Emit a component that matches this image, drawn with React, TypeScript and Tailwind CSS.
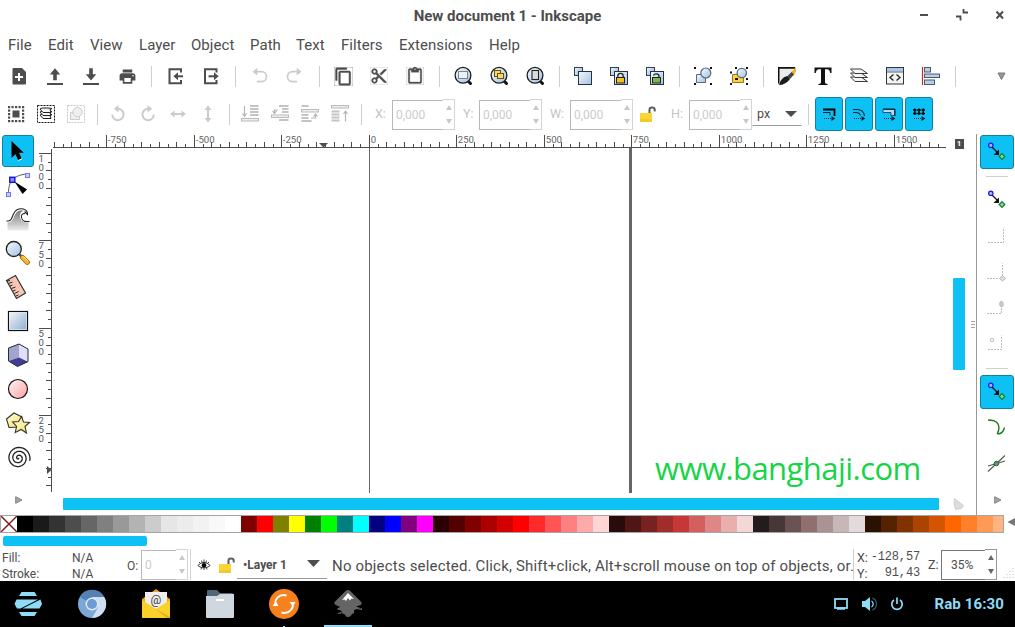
import React from "react";
import type { ReactNode } from "react";
import { MdPrint, MdContentCopy, MdContentCut, MdContentPaste } from "react-icons/md";

const D = "#4d4d4d";
const L = "#cbcbcb";

function Ico({ children, s = 24 }: { children: ReactNode; s?: number }) {
  return (
    <svg width={s} height={s} viewBox={`0 0 ${s} ${s}`} fill="none" className="shrink-0">
      {children}
    </svg>
  );
}

function Defs() {
  return (
    <svg width="0" height="0" className="absolute">
      <defs>
        <linearGradient id="blue" x1="0" y1="0" x2="1" y2="1">
          <stop offset="0" stopColor="#f4f9fd" />
          <stop offset="1" stopColor="#a3c2e3" />
        </linearGradient>
        <linearGradient id="rect" x1="0" y1="0" x2="1" y2="1">
          <stop offset="0" stopColor="#f4f8fb" />
          <stop offset="1" stopColor="#8badd0" />
        </linearGradient>
        <linearGradient id="pink" x1="0" y1="0" x2="1" y2="1">
          <stop offset="0" stopColor="#fff6f6" />
          <stop offset="1" stopColor="#ffa0a4" />
        </linearGradient>
        <linearGradient id="yellow" x1="0" y1="0" x2="1" y2="1">
          <stop offset="0" stopColor="#fffce8" />
          <stop offset="1" stopColor="#fbe45a" />
        </linearGradient>
        <linearGradient id="grey" x1="0" y1="0" x2="0" y2="1">
          <stop offset="0" stopColor="#777" />
          <stop offset="1" stopColor="#ececec" />
        </linearGradient>
      </defs>
    </svg>
  );
}

const ZoomIcon = ({ children }: { children: ReactNode }) => (
  <Ico>
    <path d="M17 17l2.500 2.500" stroke="#111" strokeWidth="3" strokeLinecap="round" />
    <circle cx="12" cy="11.300" r="7.900" fill="url(#blue)" stroke="#1c1c1c" strokeWidth="1.300" />
    {children}
  </Ico>
);

const CloneIcon = ({ lock }: { lock?: string }) => (
  <Ico>
    <rect x="3.500" y="3.500" width="8" height="8" fill="url(#rect)" stroke="#2d3f55" />
    <rect x="7.500" y="7.500" width="13" height="13" fill="url(#blue)" stroke="#26323f" />
    {lock && (
      <>
        <path d={lock === "#f5c21c" ? "M10.800 14v-2a2.700 2.700 0 0 1 5.400 0v2" : "M10.500 11.500a2.800 2.300 0 0 1 5.500 .4v2"} stroke="#222" strokeWidth="1.300" />
        <rect x="9.500" y="13.500" width="8" height="5.500" fill={lock} stroke="#222" />
      </>
    )}
  </Ico>
);

const Handles = () => (
  <path d="M3 3h2v2h-2zM19 3h2v2h-2zM3 19h2v2h-2zM19 19h2v2h-2z" fill="#111" />
);

const Sep = () => (
  <span className="flex h-full w-3 shrink-0 items-center justify-center">
    <span className="h-[21px] w-px bg-[#cfcfcf]" />
  </span>
);

const Cell = ({ children }: { children: ReactNode }) => (
  <span className="flex h-full w-9 shrink-0 items-center justify-center text-[#4d4d4d]">{children}</span>
);

const Cell30 = ({ children }: { children: ReactNode }) => (
  <span className="flex h-full w-[30px] shrink-0 items-center justify-center">{children}</span>
);

function CommandBar() {
  return (
    <div className="mb-[2px] flex h-8 shrink-0 pl-px">
      <Cell>
        <Ico>
          <path d="M6.500 4h8.500l4 4v11.500a1 1 0 0 1-1 1H6.500a1 1 0 0 1-1-1V5a1 1 0 0 1 1-1z" fill={D} />
          <path d="M12 9v8M8 13h8" stroke="#fff" strokeWidth="2" />
        </Ico>
      </Cell>
      <Cell>
        <Ico><path d="M12 4.200l5.200 6.300h-3.400v5.800h-3.600v-5.800H6.800zM4 19h16v2H4z" fill={D} /></Ico>
      </Cell>
      <Cell>
        <Ico><path d="M12 16.500L6.800 10.300h3.400V4.300h3.600v6h3.400zM4 19h16v2H4z" fill={D} /></Ico>
      </Cell>
      <Cell><MdPrint size={19} /></Cell>
      <Sep />
      <Cell>
        <Ico>
          <path d="M18 8.500V5.300H6.500v14H18v-3.300" stroke={D} strokeWidth="2" />
          <path d="M20 12.300h-7" stroke={D} strokeWidth="2" />
          <path d="M15 8.300v8l-4.600-4z" fill={D} />
        </Ico>
      </Cell>
      <Cell>
        <Ico>
          <path d="M17.500 8.500V5.300H6v14h11.500v-3.300" stroke={D} strokeWidth="2" />
          <path d="M9.500 12.300h7" stroke={D} strokeWidth="2" />
          <path d="M15 8.300v8l4.600-4z" fill={D} />
        </Ico>
      </Cell>
      <Sep />
      <Cell>
        <Ico>
          <path d="M9 7.700h5.500a5 5 0 0 1 0 10H10" stroke={L} strokeWidth="1.800" />
          <path d="M10.300 3.800v7.800L5.500 7.700z" fill={L} />
        </Ico>
      </Cell>
      <Cell>
        <Ico>
          <path d="M15 7.700H9.500a5 5 0 0 0 0 10H14" stroke={L} strokeWidth="1.800" />
          <path d="M13.700 3.800v7.800l4.800-3.900z" fill={L} />
        </Ico>
      </Cell>
      <Sep />
      <Cell><MdContentCopy size={19} stroke={D} strokeWidth={0.6} /></Cell>
      <Cell><MdContentCut size={18} stroke={D} strokeWidth={0.3} /></Cell>
      <Cell><MdContentPaste size={18} stroke={D} strokeWidth={0.4} /></Cell>
      <Sep />
      <Cell>
        <ZoomIcon>
          <rect x="7.500" y="7.500" width="9" height="7" fill="#e9f1f9" stroke="#222" strokeDasharray="1 1" />
        </ZoomIcon>
      </Cell>
      <Cell>
        <ZoomIcon>
          <rect x="7.500" y="6.500" width="6" height="6" fill="#fbd768" stroke="#6d5310" />
          <rect x="10.500" y="9.500" width="6" height="5" fill="#fbd768" stroke="#6d5310" />
        </ZoomIcon>
      </Cell>
      <Cell>
        <ZoomIcon>
          <rect x="9" y="6.500" width="6.500" height="9" fill="#dcdcdc" stroke="#222" strokeWidth="1.100" />
        </ZoomIcon>
      </Cell>
      <Sep />
      <Cell><CloneIcon /></Cell>
      <Cell><CloneIcon lock="#f5c21c" /></Cell>
      <Cell><CloneIcon lock="#79b84c" /></Cell>
      <Sep />
      <Cell>
        <Ico>
          <path d="M5.500 10.500h9v8h-9z" fill="url(#blue)" stroke="#56697f" />
          <circle cx="14.800" cy="9" r="5" fill="url(#blue)" stroke="#56697f" strokeWidth="1.200" />
          <Handles />
        </Ico>
      </Cell>
      <Cell>
        <Ico>
          <path d="M5.500 10.500h11v8h-11z" fill="#fbd146" stroke="#9c7413" />
          <circle cx="14.800" cy="9" r="4.700" fill="url(#blue)" stroke="#56697f" strokeWidth="1.200" />
          <path d="M8 3h2v2h-2zM19 3h2v2h-2zM3 7.500h2v2h-2zM19 14h2v2h-2zM3 19h2v2h-2zM19 19h2v2h-2zM8 14h3v2H8z" fill="#111" />
        </Ico>
      </Cell>
      <Sep />
      <Cell>
        <Ico>
          <path d="M3.500 3.500h17L4 20.500z" fill="#e9edf0" />
          <path d="M3 3h17v1.800H4.500V18L3 20.500z" fill="#111" />
          <path d="M4 21c1-5 5-9 9-9l2 3c-3 4-7 6-11 6z" fill="#1b1b1b" />
          <path d="M12 12.500l5-5 2.500 2.500-4.500 5z" fill="#444" />
          <path d="M16.500 8L21 3v4.500l-2 3z" fill="#f2b01e" />
        </Ico>
      </Cell>
      <Cell>
        <Ico><path d="M3.500 3.500h17v5.500h-1.300c-.5-2.800-1.400-3.800-3.200-3.800H14V18c0 1.400.6 1.800 2.500 1.900V21h-9v-1.100C9.400 19.800 10 19.400 10 18V5.200H8C6.200 5.200 5.300 6.200 4.800 9H3.500z" fill="#111" /></Ico>
      </Cell>
      <Cell>
        <Ico>
          {[13.5, 9.5, 5.5].map((y) => (
            <path key={y} d={`M3.500 ${y - 0.500}h10.500l6.500 4.500H8z`} fill="#f5f5f5" stroke="#3a3a3a" />
          ))}
        </Ico>
      </Cell>
      <Cell>
        <Ico>
          <rect x="3.500" y="3.500" width="17" height="16.500" fill="#f4f4ee" stroke="#31363c" />
          <path d="M4 4h16v3.500H4z" fill="#a9c8e8" />
          <path d="M4 8h16" stroke="#53677d" />
          <path d="M10.500 10.500L7 13.500l3.500 3M13.500 10.500l3.500 3-3.500 3" stroke="#222" strokeWidth="1.300" />
        </Ico>
      </Cell>
      <Cell>
        <Ico>
          <path d="M3.500 3v18" stroke="#c02a2a" strokeWidth="1.200" />
          <rect x="5.500" y="3.500" width="6" height="4.500" fill="#b9cfe6" stroke="#4c5b6c" />
          <rect x="5.500" y="10" width="15" height="3.500" fill="#b9cfe6" stroke="#4c5b6c" />
          <rect x="5.500" y="16" width="10" height="4.500" fill="#b9cfe6" stroke="#4c5b6c" />
        </Ico>
      </Cell>
      <Sep />
      <span className="ml-[31px] flex items-center">
        <Ico s={18}><path d="M6 6h7L9.500 12.500z" fill="#999" stroke="#777" /></Ico>
      </span>
    </div>
  );
}

function Spin({ w, value, dark = false, h = 31 }: { w: number; value: string; dark?: boolean; h?: number }) {
  const c = dark ? "#666" : "#c8c8c8";
  return (
    <span className="flex shrink-0" style={{ width: w, height: h }}>
      <span
        className={`mt-px flex flex-1 items-center border-y border-l text-[12px] ${
          dark ? "border-[#777] pl-[9px] text-[#4d4d4d]" : "border-[#b9b9b9] pl-[3px] text-[#cbcbcb]"
        }`}
      >
        {value}
      </span>
      <span className={`flex w-3 flex-col items-center justify-between border-y border-r py-[5px] ${dark ? "border-[#999]" : "border-[#d4d4d4]"}`}>
        <svg width="6" height="5"><path d="M0 5L3 0l3 5z" fill={c} /></svg>
        <svg width="6" height="5"><path d="M0 0l3 5 3-5z" fill={c} /></svg>
      </span>
    </span>
  );
}

const Lock = () => (
  <svg width="16" height="16" viewBox="0 0 16 16" fill="none" className="shrink-0">
    <path d="M9.500 7V3.800a2.600 2.300 0 0 1 5.200 0V5.500" stroke="#5c5c5c" strokeWidth="2" />
    <rect y="7" width="12" height="9" fill="#fbd535" />
    <path d="M0 13h12v3H0z" fill="#f6c828" />
  </svg>
);

const Turn = ({ flip = false }: { flip?: boolean }) => (
  <Ico>
    <g transform={flip ? "translate(24 0) scale(-1 1)" : undefined}>
      <path d="M11.500 6.800a5.700 5.700 0 1 1-5.300 5.700" stroke={L} strokeWidth="1.900" />
      <path d="M12.500 3v7.600L7.800 6.800z" fill={L} />
    </g>
  </Ico>
);

const AffectBtn = ({ children }: { children: ReactNode }) => (
  <span className="flex h-[34px] w-7 shrink-0 items-center justify-center rounded-[3px] border border-[#12809f] bg-[#0dc1f5]">
    <svg width="14" height="16" viewBox="0 0 14 16" fill="none">
      {children}
      <path d="M2 12.500h8" stroke="#063848" strokeDasharray="1 1" />
      <path d="M9.500 10v5l3.800-2.500z" fill="#05252f" />
    </svg>
  </span>
);

function ToolControls() {
  const lab = "shrink-0 text-[12.5px] text-[#c4c4c4]";
  const dots = [4, 7.500, 11, 14.500, 18];
  return (
    <div className="flex h-10 shrink-0 items-center pl-px">
      <Cell30>
        <Ico>
          {dots.flatMap((x) =>
            dots
              .filter((y) => x === 4 || x === 18 || y === 4 || y === 18)
              .map((y) => <rect key={`${x}-${y}`} x={x} y={y} width="2.200" height="2.200" fill={D} />)
          )}
          <rect x="8.500" y="8.500" width="7" height="7" fill={D} />
        </Ico>
      </Cell30>
      <Cell30>
        <Ico>
          <rect x="3.500" y="3.500" width="17" height="17" stroke="#111" strokeDasharray="2 1" />
          {[14, 11, 8].map((y) => (
            <path key={y} d={`M6 ${y - 1}l2-1h6l4 .5-2 1 1 3H9z`} fill="#f3f3f3" stroke="#222" />
          ))}
        </Ico>
      </Cell30>
      <Cell30>
        <Ico>
          <rect x="3.500" y="3.500" width="17" height="17" stroke="#c8c8c8" strokeDasharray="2 1" />
          <path d="M6.500 10.500h9v7h-9z" fill="#f0f0f0" stroke="#ccc" />
          <circle cx="13.500" cy="10" r="4.700" fill="#efefef" stroke="#ccc" />
        </Ico>
      </Cell30>
      <Sep />
      <Cell30><Turn /></Cell30>
      <Cell30><Turn flip /></Cell30>
      <Cell30>
        <Ico><path d="M4 12l4.500-3.500v2.500h7V8.500L20 12l-4.500 3.500V13h-7v2.500z" fill={L} /></Ico>
      </Cell30>
      <Cell30>
        <Ico><path d="M12 3.500l3.500 4.500H13v8h2.500L12 20.500 8.500 16H11V8H8.500z" fill={L} /></Ico>
      </Cell30>
      <Sep />
      <Cell30>
        <Ico>
          <path d="M12 4h8.500M12 7h8.500M12 10h8.500M12 13h8.500" stroke="#c4c4c4" strokeWidth="2" />
          <rect x="3.500" y="16.500" width="17" height="2.500" fill="#eee" stroke="#bbb" />
          <path d="M6.500 4v10M4.500 11.500l2 3 2-3" stroke="#b5b5b5" strokeWidth="1.200" />
        </Ico>
      </Cell30>
      <Cell30>
        <Ico>
          <path d="M11 4h9.500M14 7h6.500M14 10h6.500M11 18h9.500" stroke="#c4c4c4" strokeWidth="2" />
          <rect x="3.500" y="13" width="17" height="2.500" fill="#eee" stroke="#bbb" />
          <path d="M10 8H6.500v3M4.500 9l2 2.500 2-2.500" stroke="#b5b5b5" strokeWidth="1.200" />
        </Ico>
      </Cell30>
      <Cell30>
        <Ico>
          <path d="M3.500 4h7M3.500 13h7M3.500 16h7M3.500 19h10" stroke="#c4c4c4" strokeWidth="2" />
          <rect x="3.500" y="7.500" width="17" height="2.500" fill="#eee" stroke="#bbb" />
          <path d="M13 16h4.500v-3M15.500 14.500l2-2.500 2 2.500" stroke="#b5b5b5" strokeWidth="1.200" />
        </Ico>
      </Cell30>
      <Cell30>
        <Ico>
          <rect x="3.500" y="3.500" width="17" height="2.500" fill="#eee" stroke="#bbb" />
          <path d="M3.500 9.500h8M3.500 12.500h8M3.500 15.500h8M3.500 18.500h8" stroke="#c4c4c4" strokeWidth="2" />
          <path d="M17.500 19.500v-10M15.500 12l2-3 2 3" stroke="#b5b5b5" strokeWidth="1.200" />
        </Ico>
      </Cell30>
      <Sep />
      <span className={`${lab} ml-[8px] w-[17px]`}>X:</span>
      <Spin w={63} value="0,000" />
      <span className={`${lab} ml-[8px] w-[16px]`}>Y:</span>
      <Spin w={63} value="0,000" />
      <span className={`${lab} ml-[8px] w-[20px]`}>W:</span>
      <Spin w={63} value="0,000" />
      <span className="ml-[7px] flex w-[31px]"><Lock /></span>
      <span className={`${lab} w-[18px]`}>H:</span>
      <Spin w={63} value="0,000" />
      <span className="mb-[8px] flex h-[23px] w-[50px] shrink-0 items-center justify-between self-end border-x border-b border-x-transparent border-b-[#999] pl-[4px] pr-[4px] text-[12.5px] text-[#4d4d4d]">
        px
        <svg width="12" height="6"><path d="M0 0h12L6 6z" fill={D} /></svg>
      </span>
      <Sep />
      <span className="ml-px flex gap-[2px]">
        <AffectBtn>
          <path d="M1 6.500h7v3" stroke="#05252f" />
          <path d="M1 3.500h11.500V10" stroke="#000" strokeWidth="1.800" />
        </AffectBtn>
        <AffectBtn>
          <path d="M1 3.500h4c4 0 7 2.500 7.500 6.500M1 6.500h2.500c3 0 4.500 1 5 3" stroke="#05252f" strokeWidth="1.100" />
        </AffectBtn>
        <AffectBtn>
          <path d="M1 3.500h11.500V9.500H9V6.500H1z" fill="#b9d8f3" stroke="#24536c" />
          <path d="M1 3h12v7" stroke="#05252f" />
        </AffectBtn>
        <AffectBtn>
          {[2.800, 7, 11.200].map((x) => (
            <path key={x} d={`M${x - 1.800} 4h3.600M${x - 1.800} 7.500h3.600M${x} 2.500v6.500`} stroke="#000" strokeWidth="1.400" />
          ))}
        </AffectBtn>
      </span>
    </div>
  );
}

function HRuler() {
  const ticks: ReactNode[] = [];
  for (let i = -36; i <= 65; i++) {
    const x = Math.floor(369.3 + i * 8.75) - 38;
    if (x < 15 || x > 908) continue;
    const top = i % 10 === 0 ? 1 : i % 2 === 0 ? 8 : 10;
    ticks.push(<rect key={i} x={x} y={top} width="1" height={14 - top} fill={D} />);
    if (i % 10 === 0)
      ticks.push(
        <text key={`t${i}`} x={x + 1.8} y="9" fontSize="9.6" fill="#666">
          {i * 25}
        </text>
      );
  }
  return (
    <svg width="908" height="14" className="shrink-0">
      {ticks}
      <rect x="15" y="13" width="894" height="1" fill={D} />
      <path d="M281 9h9l-4.500 4.500z" fill={D} />
    </svg>
  );
}

function VRuler() {
  const ticks: ReactNode[] = [];
  for (let i = 0; i <= 39; i++) {
    const y = Math.floor(5.3 + i * 8.75);
    if (y > 344) continue;
    const x = i % 10 === 0 ? 1 : i % 2 === 0 ? 8 : 10;
    ticks.push(<rect key={i} x={x} y={y} width={14 - x} height="1" fill={D} />);
    if (i % 10 === 0)
      String(1000 - i * 25).split("").forEach((ch, k) =>
        ticks.push(
          <text key={`${i}-${k}`} x="0.600" y={y + 9 + k * 9} fontSize="9.6" fill="#555">
            {ch}
          </text>
        )
      );
  }
  return (
    <svg width="14" height="345" className="shrink-0">
      {ticks}
      <rect x="13" y="1" width="1" height="343" fill={D} />
      <path d="M9 318v8l4.500-4z" fill={D} />
    </svg>
  );
}

const ToolCell = ({ children, active = false }: { children: ReactNode; active?: boolean }) => (
  <span
    className={
      active
        ? "my-px ml-[2px] flex h-8 w-8 shrink-0 items-center justify-center rounded-[3px] border border-[#12809f] bg-[#0dc1f5]"
        : "ml-px flex h-[34px] w-[34px] shrink-0 items-center justify-center"
    }
  >
    {children}
  </span>
);

function spiral() {
  let d = "";
  for (let t = 0; t <= 18.8; t += 0.2) {
    const r = 0.62 * t;
    const a = t + 0.3;
    d += `${d ? "L" : "M"}${(14.5 + r * Math.cos(a)).toFixed(2)} ${(15 + r * Math.sin(a)).toFixed(2)}`;
  }
  return d;
}

function Toolbox() {
  return (
    <div className="flex w-[38px] shrink-0 flex-col">
      <ToolCell active>
        <Ico s={28}>
          <path d="M7.500 4v17l4-3.800 2.700 6 3.500-1.600-2.700-5.800h4.800z" fill="#000" />
          <path d="M14.200 23.500l3.800-1.700" stroke="#fff" strokeWidth="1" />
        </Ico>
      </ToolCell>
      <ToolCell>
        <Ico s={28}>
          <path d="M4.500 22c0-8 2-18 19-19" stroke="#555" />
          <rect x="2.500" y="21.500" width="4" height="4" fill="#c9c9ff" stroke="#7676e8" />
          <rect x="21.500" y="2.500" width="4" height="4" fill="#c9c9ff" stroke="#7676e8" />
          <rect x="5.800" y="6.300" width="5" height="5" fill="#8c8cf5" stroke="#1717df" strokeWidth="1.500" />
          <path d="M10.500 10.500l12.500 8-4.500 4.500z" fill="#000" />
        </Ico>
      </ToolCell>
      <ToolCell>
        <Ico s={28}>
          <path d="M3.500 25.500V17c6 1 5-8 10.500-11 3-2 7-1 9 1-4 .5-5 1-5 5 .5 3 2 5 6.500 5V25.500z" fill="url(#grey)" />
          <path d="M2.500 16c8 1 4-10 12.500-12 5-1 9 1.500 8.500 5.500M22 8c-3-1.500-5 0-4.500 4 .5 2.500 3 4 5 4h2" stroke="#fff" strokeWidth="3" />
          <path d="M2.500 16c8 1 4-10 12.500-12 5-1 9 1.500 8.500 5.500l-3-3M21 8.500c-2.500 0-4 1-3.500 4 .5 2.500 3 4 5 4h3" stroke="#222" strokeWidth="1.100" />
        </Ico>
      </ToolCell>
      <ToolCell>
        <Ico s={28}>
          <path d="M15.500 15.500l3.500 3.500" stroke="#555" strokeWidth="2.500" />
          <circle cx="9.800" cy="10" r="7.500" fill="url(#blue)" stroke="#222" strokeWidth="1.300" />
          <path d="M18.500 18.500l4.800 4.800" stroke="#99630b" strokeWidth="5" strokeLinecap="round" />
          <path d="M18.500 18.500l4.800 4.800" stroke="#fbb62d" strokeWidth="3.500" strokeLinecap="round" />
          <path d="M19.500 17.500l4.500 4.500" stroke="#ffe49a" />
        </Ico>
      </ToolCell>
      <ToolCell>
        <Ico s={28}>
          <path d="M2.500 7.500l9-5 10 17.500-9 5.500z" fill="#f7c7b3" stroke="#333" strokeWidth="1.200" />
          <path d="M3 8l3-.5M4.500 10.500l4-1.500M6 13l2.500-1M7.500 15.500l4-1.500M9 18l2.500-1M10.500 20.500l4-2M12 23l2.500-1" stroke="#222" />
        </Ico>
      </ToolCell>
      <ToolCell>
        <Ico s={28}><rect x="4.500" y="4.500" width="19" height="19" fill="url(#rect)" stroke="#111" strokeWidth="1.200" /><rect x="5.500" y="5.500" width="17" height="17" stroke="#fff" strokeOpacity=".55" /></Ico>
      </ToolCell>
      <ToolCell>
        <Ico s={28}>
          <path d="M4.500 7L15 3l9 5v12.500L13.500 25.500 4.500 20z" fill="#9b9bcb" />
          <path d="M15 3v13.500l9 4.500V8z" fill="#dfdffa" />
          <path d="M4.500 20L15 16.500l9 4.500-10.500 4.500z" fill="#3d3d91" />
          <path d="M4.500 7.500l10.500-4.500v13.500L4.500 20z" fill="#a3a3cf" />
          <path d="M4.500 7L15 3l9 5v12.500L13.500 25.500 4.500 20z" stroke="#2a2a3a" />
        </Ico>
      </ToolCell>
      <ToolCell>
        <Ico s={28}><circle cx="14" cy="14" r="9.500" fill="url(#pink)" stroke="#151515" strokeWidth="1.200" /></Ico>
      </ToolCell>
      <ToolCell>
        <Ico s={28}>
          <path d="M2.500 10L10 4l8 4-3 10-10 .5z" fill="url(#yellow)" stroke="#333" strokeWidth="1.100" />
          <path d="M17.500 7.500l2 5.500 6 .5-4.500 4 1.500 6.500-5.300-3.500-6 3 1.400-6-4-4.500 6-.5z" fill="url(#yellow)" stroke="#333" strokeWidth="1.100" />
        </Ico>
      </ToolCell>
      <ToolCell>
        <Ico s={28}><path d={spiral()} stroke="#222" strokeWidth="1.300" /></Ico>
      </ToolCell>
      <span className="mt-[22px] flex shrink-0 justify-center pr-px"><Arrow /></span>
    </div>
  );
}

const Arrow = () => (
  <svg width="8" height="8" fill="none"><path d="M.700 .700v6.600L7 4z" fill="#a5a5a5" stroke="#808080" /></svg>
);

const SnapNodes = () => (
  <Ico>
    <path d="M7 7l5.500 5.500" stroke="#111" strokeWidth="1.300" />
    <path d="M14 9.500v5.500H8.500z" fill="#111" />
    <circle cx="5.800" cy="5.300" r="2.200" fill="#a9b8ff" stroke="#1818ee" strokeWidth="1.200" />
    <path d="M17 13.700l2.800 2.800-2.800 2.800-2.800-2.800z" fill="#8fcbd0" stroke="#158015" strokeWidth="1.200" />
  </Ico>
);

const SnapCell = ({ children }: { children: ReactNode }) => (
  <span className="flex h-9 shrink-0 items-center justify-center pl-[2px]">{children}</span>
);
const SnapOn = () => (
  <span className="ml-[3px] flex h-[34px] w-[34px] shrink-0 items-center justify-center rounded-[3px] border border-[#12809f] bg-[#0dc1f5]">
    <SnapNodes />
  </span>
);

function SnapBar() {
  return (
    <div className="flex w-[38px] shrink-0 flex-col pt-px">
      <SnapOn />
      <span className="mb-[5px] ml-[9px] mt-[7px] h-px w-[22px] shrink-0 bg-[#cfcfcf]" />
      <SnapCell><SnapNodes /></SnapCell>
      <SnapCell><Ico><path d="M3 18.500h15.500V3.500" stroke="#bbb" strokeDasharray="2 1" /></Ico></SnapCell>
      <SnapCell><Ico><path d="M2 18.500h15.500V3.500" stroke="#bbb" strokeDasharray="2 1" /><path d="M17.500 15.500l3 3-3 2.500-3-2.500z" fill="#ddd" stroke="#bbb" /></Ico></SnapCell>
      <SnapCell><Ico><path d="M2 17.500h14.500V6" stroke="#bbb" strokeDasharray="2 1" /><ellipse cx="16.500" cy="8" rx="1.800" ry="2.800" fill="#ccc" stroke="#bbb" /></Ico></SnapCell>
      <SnapCell><Ico><path d="M3 17.500h13.500V3.500" stroke="#bbb" strokeDasharray="2 1" /><circle cx="7" cy="8" r="1.800" fill="#eee" stroke="#c4c4c4" /></Ico></SnapCell>
      <span className="mb-[6px] ml-[9px] mt-[6px] h-px w-[22px] shrink-0 bg-[#cfcfcf]" />
      <SnapOn />
      <SnapCell><Ico><path d="M3 5c10 0 13 5 9.500 13.500 3.500 1 6-2 7-6" stroke="#1c7a1c" strokeWidth="1.400" /></Ico></SnapCell>
      <SnapCell><Ico><path d="M3 15l17-5M3 20.500L20 4.500" stroke="#555" strokeWidth="1.100" /><circle cx="11.500" cy="12.500" r="2.300" fill="#5f8f8f" stroke="#1d7a1d" /></Ico></SnapCell>
      <span className="flex h-[37px] shrink-0 items-center justify-center pl-[3px]"><Arrow /></span>
    </div>
  );
}

const PALETTE = (
  "000000 1a1a1a 333333 4d4d4d 666666 808080 999999 b3b3b3 cccccc e6e6e6 ececec f2f2f2 f9f9f9 ffffff " +
  "800000 ff0000 808000 ffff00 008000 00ff00 008080 00ffff 000080 0000ff 800080 ff00ff " +
  "2b0000 550000 800000 aa0000 d40000 ff0000 ff2a2a ff5555 ff8080 ffaaaa ffd5d5 " +
  "280b0b 501616 782121 a02c2c c83737 d35f5f de8787 e9afaf f4d7d7 " +
  "241c1c 483737 6c5353 916f6f ac9393 c8b7b7 e3dbdb " +
  "2b1100 552200 803300 aa4400 d45500 ff6600 ff7f2a ff9955 ffb380"
).split(" ");

function Palette() {
  return (
    <div className="flex h-[18px] shrink-0 items-center">
      <div className="flex h-[18px] w-[1004px] shrink-0 overflow-hidden border border-[#a5a5a5]">
        <svg width="16" height="16" className="shrink-0"><path d="M0 0l16 16M16 0L0 16" stroke="#7d1518" strokeWidth="1.400" /></svg>
        {PALETTE.map((c, i) => (
          <span key={i} className="h-4 w-4 shrink-0" style={{ backgroundColor: `#${c}` }} />
        ))}
      </div>
      <svg width="8" height="8" className="mb-[5px] ml-[3px]"><path d="M8 0v8L.500 4z" fill="#777" /></svg>
    </div>
  );
}

function StatusBar() {
  return (
    <div className="flex h-[35px] shrink-0 pt-[3px] text-[#4d4d4d]">
      <div className="flex w-[70px] shrink-0 flex-col pl-[2px] pt-px text-[12px] leading-4"><span>Fill:</span><span>Stroke:</span></div>
      <div className="flex w-[57px] shrink-0 flex-col pl-[2px] pt-px text-[12px] leading-4"><span>N/A</span><span>N/A</span></div>
      <span className="w-[14px] shrink-0 pt-[9px] text-[12px] leading-4">O:</span>
      <Spin w={47} value="0" />
      <span className="ml-[2px] h-[31px] w-px shrink-0 bg-[#d4d4d4]" />
      <svg width="14" height="14" viewBox="0 0 14 14" fill="none" className="ml-[6px] mt-[9px] shrink-0">
        <path d="M1 7.500C4 3.500 10 3.500 13 7.500 10 10.500 4 10.500 1 7.500z" stroke="#222" />
        <circle cx="7" cy="7.300" r="2.300" fill="#000" />
        <path d="M2 4l1.500 1.500M4.500 2.500l.8 2M7 1.500v2.500M9.500 2.500l-.8 2M12 4L10.500 5.500M4 11.500l.5-1.500M7 12v-2M10 11.500L9.500 10" stroke="#333" strokeWidth=".9" />
      </svg>
      <span className="ml-[8px] mt-[8px] flex w-[18px] shrink-0"><Lock /></span>
      <span className="flex h-[30px] w-[90px] shrink-0 items-center justify-between border-b border-[#999] pl-[6px] pr-[7px] pt-[2px] text-[12px] font-bold">
        •Layer 1
        <svg width="13" height="7" className="mb-[2px]"><path d="M0 0h13L6.500 7z" fill={D} /></svg>
      </span>
      <span className="ml-[5px] w-[521px] shrink-0 overflow-hidden whitespace-nowrap pt-[7px] text-[15px] leading-5 tracking-[0.175px]">
        No objects selected. Click, Shift+click, Alt+scroll mouse on top of objects, or.
      </span>
      <span className="h-[31px] w-px shrink-0 bg-[#cfcfcf]" />
      <div className="flex w-[16px] shrink-0 flex-col pl-[3px] pt-px text-[12.5px] leading-4"><span>X:</span><span>Y:</span></div>
      <div className="flex w-[50px] shrink-0 flex-col items-end font-['Liberation_Mono',monospace] text-[12px] leading-4 tracking-[-0.15px]">
        <span>-128,57</span><span>91,43</span>
      </div>
      <span className="w-[21px] shrink-0 pl-[8px] pt-[8px] text-[12.5px] leading-4">Z:</span>
      <Spin w={56} value="35%" dark />
      <svg width="12" height="12" className="ml-[6px] mt-[18px]">
        <path d="M9.500 1.500h1M6.500 4.500h4M3.500 7.500h7M.500 10.500h10" stroke="#bbb" strokeDasharray="1 2" />
      </svg>
    </div>
  );
}

function Taskbar() {
  const cell = "relative flex h-full w-16 shrink-0 items-center justify-center";
  return (
    <div className="flex h-[46px] shrink-0 bg-black">
      <div className="-ml-1 flex">
        <span className={cell}>
          <Ico s={32}>
            <path d="M9.500 4h13l2.500 4H7zM4.500 11.500H26L8.500 20.500H5L2.500 16zM28.500 11.500L30 16l-2.500 4.500H10.500zM7 24h18l-2.500 4h-13z" fill="#8edcf7" />
          </Ico>
        </span>
        <span className={cell}>
          <Ico s={32}>
            <circle cx="16" cy="16" r="14" fill="#7ba8d8" />
            <path d="M16 16L3.800 9A14 14 0 0 1 28.200 9z" fill="#5580b4" />
            <path d="M16 9h12.200A14 14 0 0 1 16 30l6-10.500z" fill="#cfdef0" />
            <circle cx="16" cy="16" r="6.500" fill="#dfeaf5" />
            <circle cx="16" cy="16" r="5" fill="#6c9ad6" />
          </Ico>
        </span>
        <span className={cell}>
          <Ico s={32}>
            <path d="M2 11l10-7 4-3 4 3 10 7v18a1 1 0 0 1-1 1H3a1 1 0 0 1-1-1z" fill="#f0a519" />
            <path d="M5 4h22v18H5z" fill="#eee" />
            <text x="16" y="15.500" textAnchor="middle" fontSize="12" fill="#444" fontFamily="Roboto, sans-serif">@</text>
            <path d="M2 12l14 9 14-9v17a1 1 0 0 1-1 1H3a1 1 0 0 1-1-1z" fill="#fbd028" />
            <path d="M15 20.500L30 29v1h-3z" fill="#e5aa20" />
          </Ico>
        </span>
        <span className={cell}>
          <Ico s={32}>
            <path d="M3 3a1 1 0 0 1 1-1h9l3 3h12a1 1 0 0 1 1 1v8H3z" fill="#4f6878" />
            <path d="M2 8h11l3-2h14v23a1 1 0 0 1-1 1H3a1 1 0 0 1-1-1z" fill="#d0d8df" />
            <rect x="12" y="11" width="8" height="2" fill="#fff" />
          </Ico>
        </span>
        <span className={cell}>
          <Ico s={32}>
            <circle cx="16" cy="16" r="15" fill="#f6821f" />
            <path d="M7.500 18a8.500 8.500 0 0 1 11-10.500M24.500 14a8.500 8.500 0 0 1-11 10.500" stroke="#fff" strokeWidth="2" />
            <path d="M8 8.500a11 11 0 0 0-2 9.500" stroke="#f6821f" />
            <path d="M4.500 18h6l-2.500-4.500zM21.500 14h6l-2.500 4.500z" fill="#fff" />
          </Ico>
          <span className="absolute bottom-0 h-px w-[2px] bg-[#8edcf7]" />
        </span>
        <span className={cell}>
          <Ico s={32}>
            <path d="M16 2c1 0 2 .6 3 1.700l10 10c2 2.500-1 4-4 4.300-2 1 4 1.500 3 2.500s-6 .5-6 2 1 2-1 3-2 3.500-5 3.500-2-2.500-4-3-3-1-2.500-2.500-6-1.500-4-3 3-1.500 2-2-7-2-4.700-4.800l10-10c1-1.100 2.200-1.700 3.200-1.700z" fill="#656565" />
            <path d="M5 25.500l4-1.500v2zM26 21.500l4-1.500v2z" fill="#656565" />
            <path d="M16 5l6 6-2.500-.5-1.500 2-2-2.500-2 3-1.500-1.500-2.500.5z" fill="#fff" />
          </Ico>
          <span className="absolute bottom-0 left-2 h-[2px] w-12 bg-[#8edcf7]" />
        </span>
      </div>
      <div className="ml-auto flex items-center text-[#8edcf7]">
        <svg width="14" height="14" fill="none" className="mr-[13px]"><rect x="1" y="2" width="12" height="9" stroke="#8edcf7" strokeWidth="1.800" /><path d="M3 11.500h8" stroke="#8edcf7" strokeWidth="2.500" /></svg>
        <svg width="16" height="16" fill="none" className="mr-[13px]"><path d="M1 5h3l5-4v14l-5-4H1z" fill="#8edcf7" /><path d="M10.500 5a3.500 3.500 0 0 1 0 6" stroke="#8edcf7" strokeWidth="1.300" /><path d="M11.500 2a6.500 6.500 0 0 1 0 12" stroke="#35535e" strokeWidth="1.400" /></svg>
        <svg width="14" height="14" fill="none" className="mr-[30px]"><path d="M4 3a5.200 5.200 0 1 0 6 0M7 .500v6.500" stroke="#8edcf7" strokeWidth="1.700" /></svg>
        <span className="mr-[11px] pt-px text-[15px] font-bold tracking-[0.12px]">Rab 16:30</span>
      </div>
    </div>
  );
}

const MENU: [string, string][] = [
  ["File", "w-[40px]"], ["Edit", "w-[42px]"], ["View", "w-[49px]"], ["Layer", "w-[52px]"], ["Object", "w-[59px]"],
  ["Path", "w-[46px]"], ["Text", "w-[45px]"], ["Filters", "w-[58px]"], ["Extensions", "w-[90px]"], ["Help", "w-[40px]"],
];

export default function App() {
  return (
    <div className="flex h-[627px] w-[1015px] flex-col overflow-hidden bg-white font-['Roboto',sans-serif] text-[#4d4d4d]">
      <Defs />
      <header className="relative flex h-[30px] shrink-0 items-center justify-center pt-[2px]">
        <h1 className="text-[15px] font-bold">New document 1 - Inkscape</h1>
        <svg width="90" height="20" viewBox="0 0 90 20" fill="none" className="absolute right-[6px] top-[5px]">
          <path d="M1 10h8" stroke={D} strokeWidth="2" />
          <path d="M37 11.500h4.500v4M44.500 4v3.500H49" stroke={D} strokeWidth="1.800" />
          <path d="M77.500 6.500l6.500 7M84 6.500l-6.500 7" stroke={D} strokeWidth="2" />
        </svg>
      </header>
      <nav className="flex h-[30px] shrink-0 items-center pl-[8px] text-[15px] tracking-[0.05px]">
        {MENU.map(([m, w]) => (
          <span key={m} className={`shrink-0 ${w}`}>{m}</span>
        ))}
      </nav>
      <CommandBar />
      <ToolControls />
      <main className="flex h-[381px] shrink-0 overflow-hidden">
        <Toolbox />
        <section className="flex w-[908px] shrink-0 flex-col">
          <HRuler />
          <div className="flex">
            <VRuler />
            <div className="relative flex h-[345px] flex-1">
              <div className="ml-[317px] w-[263px] border-l border-r-[3px] border-[#666]" />
              <p className="absolute left-[603px] top-[298px] whitespace-nowrap font-['Open_Sans',sans-serif] text-[31px] leading-[44px] tracking-[-0.55px] text-[#16d446]">
                www.banghaji.com
              </p>
            </div>
          </div>
          <div className="ml-[25px] mt-[5px] h-3 w-[876px] rounded-[1px] bg-[#0dc1f5]" />
        </section>
        <aside className="flex w-6 shrink-0 flex-col items-center">
          <span className="ml-[2px] mt-[5px] flex h-[10px] w-[9px] shrink-0 items-center justify-center bg-[#4d4d4d] text-[8px] font-bold text-white">1</span>
          <div className="ml-[2px] mt-[129px] h-[92px] w-3 shrink-0 rounded-[1px] bg-[#0dc1f5]" />
          <svg width="12" height="12" className="mt-[128px] shrink-0"><path d="M2.500 .500l9 7-2 3-6 1-1.500-6z" fill="#ddd" stroke="#d0d0d0" /></svg>
        </aside>
        <span className="flex w-[6px] shrink-0 flex-col gap-[2px] pt-[187px]">
          <i className="ml-px h-px w-1 bg-[#aaa]" /><i className="ml-px h-px w-1 bg-[#aaa]" /><i className="ml-px h-px w-1 bg-[#aaa]" />
        </span>
        <span className="w-px shrink-0 bg-[#999]" />
        <SnapBar />
      </main>
      <Palette />
      <div className="ml-[3px] mt-[3px] h-[10px] w-36 shrink-0 rounded-[2px] bg-[#0dc1f5]" />
      <StatusBar />
      <Taskbar />
    </div>
  );
}
